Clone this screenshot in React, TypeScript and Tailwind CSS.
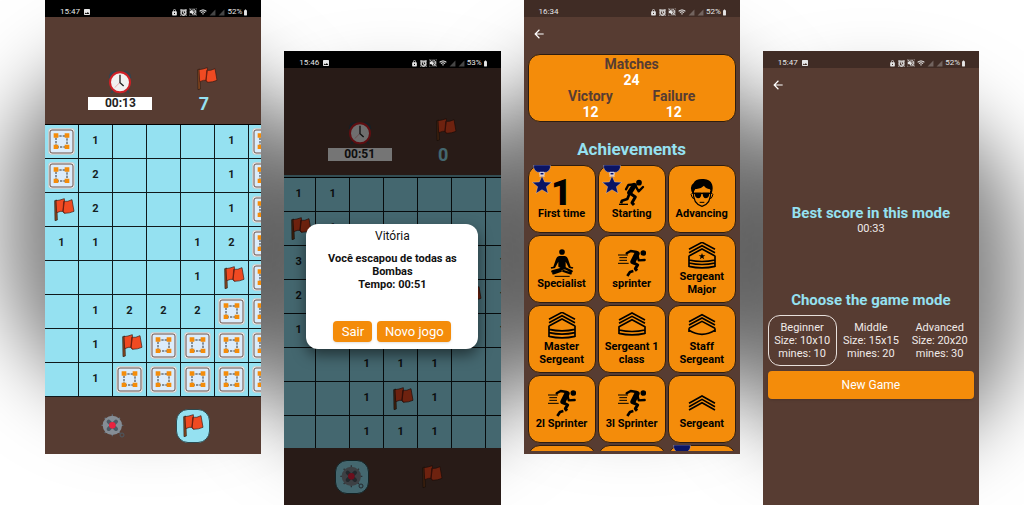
import type { ReactNode } from "react";
import {
  MdAlarm,
  MdArrowBack,
  MdBatteryFull,
  MdImage,
  MdLock,
  MdSignalCellular4Bar,
  MdVolumeOff,
  MdWifi,
} from "react-icons/md";

/* ---------- drawings ---------- */

function Flag({ className = "" }: { className?: string }) {
  return (
    <svg viewBox="0 0 66 72" className={className} aria-hidden="true">
      <path d="M5 8 L11 6 L13 66 L6 68 Z" fill="#8a4a20" stroke="#2b1a12" strokeWidth="2" />
      <path d="M9 8 Q20 7 34 2 L36 40 Q22 38 11 44 Z" fill="#f04a22" stroke="#3a1a12" strokeWidth="2" />
      <path d="M32 10 Q44 12 57 5 L63 40 Q50 46 34 46 Q29 42 30 38 Z" fill="#f04a22" stroke="#3a1a12" strokeWidth="2" />
      <path d="M34 10 L30 40 L35 46" fill="none" stroke="#6b1d10" strokeWidth="3" />
    </svg>
  );
}

function Clock() {
  return (
    <svg viewBox="0 0 72 72" className="h-6 w-6" aria-hidden="true">
      <path d="M2 24 Q2 4 22 2 L28 8 L8 28 Z M70 24 Q70 4 50 2 L44 8 L64 28 Z" fill="#34444e" />
      <path d="M16 60 L10 69 M56 60 L62 69" stroke="#34444e" strokeWidth="6" />
      <circle cx="36" cy="37" r="30" fill="#f1f1f1" stroke="#cf2027" strokeWidth="6" />
      <path d="M36 37 L20 53" stroke="#e58b8b" strokeWidth="2" />
      <path d="M36 14 V38 L47 48" fill="none" stroke="#222" strokeWidth="4" />
    </svg>
  );
}

function Mine() {
  return (
    <svg viewBox="0 0 72 72" className="h-6 w-6" aria-hidden="true">
      <path d="M34 1 V67 M1 34 H67 M11 11 L57 57 M57 11 L11 57" stroke="#5d6670" strokeWidth="4" />
      <circle cx="34" cy="34" r="29" fill="#858d95" />
      <path d="M23 23 L45 45 M45 23 L23 45" stroke="#4c5963" strokeWidth="12" strokeLinecap="round" />
      <circle cx="34" cy="34" r="10" fill="#e9223f" />
      <circle cx="63" cy="63" r="6" fill="none" stroke="#4c5963" strokeWidth="3" />
    </svg>
  );
}

function Tile() {
  return (
    <svg viewBox="0 0 81 81" className="h-[27px] w-[27px] shrink-0" aria-hidden="true">
      <rect x="1" y="1" width="79" height="79" rx="10" fill="#f0eeec" stroke="#b9bfc1" strokeWidth="2" />
      <rect x="6" y="6" width="69" height="69" rx="6" fill="#dcecfb" stroke="#6b5048" strokeWidth="3" />
      <path d="M24 24 H57 V57 H24 Z" fill="none" stroke="#333" strokeWidth="3" strokeDasharray="7 3" />
      <path d="M17 16 h14 v13 h-14z M50 16 h14 v13 h-14z M17 50 h14 v13 h-14z M50 50 h14 v13 h-14z" fill="#f48c0a" />
    </svg>
  );
}

function Sprinter() {
  return (
    <svg viewBox="0 0 84 84" className="h-7 w-7" fill="none" stroke="black" strokeLinejoin="round" aria-hidden="true">
      <path d="M0 18 H30 M4 26 H27 M4 34 H27 M0 43 H32" strokeWidth="3" />
      <circle cx="76" cy="12" r="8.5" fill="black" stroke="none" />
      <path d="M56 9 L38 6 L26 13" strokeWidth="7" strokeLinecap="round" />
      <path d="M57 14 L45 38" strokeWidth="16" strokeLinecap="round" />
      <path d="M58 17 L62 34 L80 33" strokeWidth="7" strokeLinecap="round" />
      <path d="M44 40 L59 48 L52 59 L57 65" strokeWidth="9" />
      <path d="M46 66 L36 69 L28 81" strokeWidth="8" />
    </svg>
  );
}

function Starter() {
  return (
    <svg viewBox="0 0 84 84" className="h-7 w-7" fill="none" stroke="black" strokeLinejoin="round" aria-hidden="true">
      <circle cx="63" cy="11" r="8.5" fill="black" stroke="none" />
      <path d="M46 16 L31 18 L24 31" strokeWidth="7" strokeLinecap="round" />
      <path d="M49 19 L35 41" strokeWidth="15" strokeLinecap="round" />
      <path d="M52 20 L62 37 L75 24" strokeWidth="7" strokeLinecap="round" />
      <path d="M36 43 L52 54 L42 71 L48 78" strokeWidth="9" />
      <path d="M34 45 L28 60 L12 65 L9 73" strokeWidth="8" />
      <path d="M3 76 H30" strokeWidth="4" />
    </svg>
  );
}

function Meditating() {
  return (
    <svg viewBox="0 0 84 84" className="h-7 w-7" aria-hidden="true">
      <circle cx="42" cy="9" r="8.5" />
      <path d="M33 21 H51 Q58 22 60 30 L68 53 L76 55 L74 59 L63 57 L53 38 L53 53 L42 59 L31 53 L31 38 L21 57 L10 59 L8 55 L16 53 L24 30 Q26 22 33 21 Z" />
      <path d="M13 67 L51 57 M71 67 L50 57 M16 73 L38 66 M68 73 L46 66" stroke="black" strokeWidth="7" strokeLinecap="round" />
      <path d="M20 82 H65" stroke="black" strokeWidth="3" />
    </svg>
  );
}

function CoolFace() {
  return (
    <svg viewBox="0 0 84 84" className="h-7 w-7" aria-hidden="true">
      <path d="M16 36 Q14 74 42 82 Q70 74 68 36" fill="none" stroke="black" strokeWidth="3.5" />
      <path d="M14 44 Q2 22 17 12 Q22 0 42 0 Q66 -1 72 16 Q77 30 70 45 L66 31 Q52 28 48 20 Q36 32 22 30 Z" />
      <path d="M13 41 h58 v4 h-58z" />
      <path d="M20 41 H40 Q41 57 30 58 Q20 56 20 41 Z M44 41 H64 Q64 56 54 58 Q43 57 44 41 Z" />
      <path d="M35 70 H49" stroke="black" strokeWidth="3" />
      <path d="M12 43 Q7 44 12 54 L17 60 M72 43 Q77 44 72 54 L67 60" fill="none" stroke="black" strokeWidth="3" />
    </svg>
  );
}

const chevrons = {
  three: "M3 43 L42 21 L81 43 M3 53 L42 31 L81 53 M3 63 L42 41 L81 63",
  staff: "M3 29 L42 8 L81 29 M3 39 L42 18 L81 39 M3 49 L42 28 L81 49 M3 49 V60 M81 49 V60 M3 55 Q42 79 81 55",
  first: "M3 24 L42 3 L81 24 M3 34 L42 13 L81 34 M3 44 L42 23 L81 44 M3 43 V66 M81 43 V66 M3 54 Q42 63 81 54 M3 64 Q42 73 81 64",
  master: "M3 22 L42 1 L81 22 M3 32 L42 11 L81 32 M3 42 L42 21 L81 42 M3 41 V75 M81 41 V75 M3 52 Q42 61 81 52 M3 62 Q42 71 81 62 M3 73 Q42 82 81 73",
  major: "M3 22 L42 1 L81 22 M3 32 L42 11 L81 32 M3 42 L42 21 L81 42 M3 41 V75 M81 41 V75 M3 54 Q42 63 81 54 M3 63 Q42 72 81 63 M3 73 Q42 82 81 73",
};

function Rank({ kind }: { kind: keyof typeof chevrons }) {
  return (
    <svg viewBox="0 0 84 84" className="h-7 w-7" aria-hidden="true">
      <path d={chevrons[kind]} fill="none" stroke="black" strokeWidth="5" />
      {kind === "major" && (
        <path d="M42 33 L44.5 40 H52 L46 44.5 L48.5 52 L42 47.5 L35.5 52 L38 44.5 L32 40 H39.5 Z" />
      )}
    </svg>
  );
}

function Medal() {
  return (
    <svg viewBox="0 0 60 87" className="absolute -top-px left-[3px] h-[29px] w-5" aria-hidden="true">
      <path d="M5 0 H55 V8 Q50 22 38 22 H22 Q10 22 5 8 Z" fill="#0a1464" stroke="#e8e4f4" strokeWidth="1" />
      <path d="M24 22 h12 v8 h-12z M22 33 h16" fill="#0a1464" stroke="#e8e4f4" strokeWidth="3" />
      <path d="M30 33 L38 51 L59 52 L43 65 L48 85 L30 74 L12 85 L17 65 L1 52 L22 51 Z" fill="#0a1464" stroke="#e8e4f4" strokeWidth="1" />
    </svg>
  );
}

/* ---------- phone shell ---------- */

function Phone({
  time,
  battery,
  dark,
  low,
  picture = true,
  children,
}: {
  time: string;
  battery: string;
  dark?: boolean;
  low?: boolean;
  picture?: boolean;
  children: ReactNode;
}) {
  return (
    <div className={`relative min-w-0 flex-1 ${low ? "pt-[51px]" : "pb-[51px]"}`}>
      <div
        aria-hidden="true"
        className={`absolute inset-x-0 -z-10 rounded-[108px] shadow-[0_0_80px_40px_rgba(0,0,0,0.5)] ${
          low ? "bottom-[90px] top-[140px]" : "bottom-[140px] top-[90px]"
        }`}
      />
      <section className="flex h-full flex-col overflow-hidden bg-[#573c32]">
        <header
          className={`flex h-[17px] shrink-0 items-center justify-between pl-[15px] pr-3 pt-[7px] text-[8px] leading-[10px] text-[#e6e6e6] ${
            dark ? "bg-black" : "bg-[#402c25]"
          }`}
        >
          <span className="flex items-center gap-[3px]">
            {time}
            {picture && <MdImage className="h-2 w-2" />}
          </span>
          <span className="flex items-center gap-[2px]">
            <MdLock className="h-[7px] w-[7px]" />
            <MdAlarm className="h-[7px] w-[7px] stroke-current stroke-2" />
            <MdVolumeOff className="h-2 w-2 stroke-current stroke-1" />
            <MdWifi className="h-2 w-2" />
            <MdSignalCellular4Bar className="h-[7px] w-[7px] opacity-30" />
            <MdSignalCellular4Bar className="h-[7px] w-[7px] opacity-30" />
            <span className="flex items-center">
              {battery}
              <MdBatteryFull className="h-[7px] w-[7px]" />
            </span>
          </span>
        </header>
        {children}
      </section>
    </div>
  );
}

/* ---------- game ---------- */

// "#" hidden tile, "F" flag, digit = neighbouring mines, "." empty
function Board({ rows }: { rows: string[] }) {
  return (
    <div className="grid grid-cols-[repeat(7,34px)]">
      {rows.flatMap((row, y) =>
        row.split("").map((cell, x) => (
          <button
            key={`${y}-${x}`}
            type="button"
            aria-label={`Row ${y + 1}, column ${x + 1}`}
            className="flex h-[34px] items-center justify-center border-b border-r border-[#10191c] bg-[#95e1f1] text-[11px] font-bold text-[#14201f]"
          >
            {cell === "#" ? <Tile /> : cell === "F" ? <Flag className="ml-1 h-6 w-[22px]" /> : cell === "." ? "" : cell}
          </button>
        )),
      )}
    </div>
  );
}

function Game({
  time,
  flags,
  tool,
  scrolled,
  rows,
}: {
  time: string;
  flags: number;
  tool: "mine" | "flag";
  scrolled?: boolean;
  rows: string[];
}) {
  const base = "flex h-[34px] w-[34px] items-center justify-center rounded-xl";
  const active = "border border-[#2d4a50] bg-[#95e1f1]";
  return (
    <div className="flex min-h-0 flex-1 flex-col">
      <div className="flex h-[107px] shrink-0 items-end justify-evenly pb-[10px]">
        <div className="flex flex-col items-center gap-[3px] pb-1">
          <Clock />
          <time className="w-16 bg-white text-center text-xs font-bold leading-[13px] text-[#222]">{time}</time>
        </div>
        <div className="flex flex-col gap-[3px]">
          <Flag className="h-6 w-[22px]" />
          <span className="w-4 text-center text-lg font-bold leading-5 text-[#95e1f1]">{flags}</span>
        </div>
      </div>
      <div
        className={`min-h-0 flex-1 overflow-hidden bg-[#6fa9b5] ${
          scrolled ? "[&>div]:-ml-0.5 [&>div]:mt-0.5 [&>div]:border-t" : "[&>div]:border-t"
        }`}
      >
        <Board rows={rows} />
      </div>
      <div className="flex h-[57px] shrink-0 items-center justify-center gap-[46px]">
        <button type="button" aria-label="Dig" className={`${base} ${tool === "mine" ? active : ""}`}>
          <Mine />
        </button>
        <button type="button" aria-label="Flag" className={`${base} ${tool === "flag" ? active : ""}`}>
          <Flag className="h-6 w-[22px]" />
        </button>
      </div>
    </div>
  );
}

function VictoryDialog() {
  const button = "rounded-sm bg-[#f48c0a] leading-[21px] text-[13px] text-white shadow-sm";
  return (
    <div className="absolute inset-0 flex items-center justify-center bg-black/54">
      <div
        role="dialog"
        aria-label="Vitória"
        className="flex w-[172px] flex-col items-center rounded-xl bg-white px-4 pb-[7px] pt-1 text-center text-[#111] shadow-[0_6px_14px_rgba(0,0,0,0.5)]"
      >
        <h2 className="text-xs leading-4">Vitória</h2>
        <p className="mt-2 text-[11px] font-bold leading-[13px]">
          Você escapou de todas as Bombas
          <br />
          Tempo: 00:51
        </p>
        <div className="mt-[30px] flex gap-[5px]">
          <button type="button" className={`${button} w-[39px]`}>
            Sair
          </button>
          <button type="button" className={`${button} w-[74px]`}>
            Novo jogo
          </button>
        </div>
      </div>
    </div>
  );
}

/* ---------- achievements ---------- */

function BackButton() {
  return (
    <button type="button" aria-label="Back" className="ml-2 mt-[10px] h-[14px] w-[14px] shrink-0 text-white">
      <MdArrowBack className="h-[14px] w-[14px]" />
    </button>
  );
}

function Stat({ label, value }: { label: string; value: number }) {
  return (
    <div className="flex flex-col items-center">
      <dt className="text-[#573c32]">{label}</dt>
      <dd className="text-white">{value}</dd>
    </div>
  );
}

const achievements: { name?: string; icon?: ReactNode; medal?: boolean }[] = [
  { name: "First time", icon: <span className="text-4xl font-black leading-7">1</span>, medal: true },
  { name: "Starting", icon: <Starter />, medal: true },
  { name: "Advancing", icon: <CoolFace /> },
  { name: "Specialist", icon: <Meditating /> },
  { name: "sprinter", icon: <Sprinter /> },
  { name: "Sergeant Major", icon: <Rank kind="major" /> },
  { name: "Master Sergeant", icon: <Rank kind="master" /> },
  { name: "Sergeant 1 class", icon: <Rank kind="first" /> },
  { name: "Staff Sergeant", icon: <Rank kind="staff" /> },
  { name: "2l Sprinter", icon: <Sprinter /> },
  { name: "3l Sprinter", icon: <Sprinter /> },
  { name: "Sergeant", icon: <Rank kind="three" /> },
  {},
  {},
  { medal: true },
];

function Achievements() {
  return (
    <div className="flex min-h-0 flex-1 flex-col pb-[3px]">
      <BackButton />
      <dl className="mx-1 mt-[13px] rounded-xl border border-[#2e1d10] bg-[#f48c0a] pb-px pt-px text-sm font-bold leading-4">
        <Stat label="Matches" value={24} />
        <div className="flex justify-evenly">
          <Stat label="Victory" value={12} />
          <Stat label="Failure" value={12} />
        </div>
      </dl>
      <h1 className="mt-[15px] text-center text-[17px] font-bold leading-6 text-[#95e1f1]">Achievements</h1>
      <ul className="mx-1 mt-1 grid min-h-0 flex-1 auto-rows-[68px] grid-cols-3 gap-0.5 overflow-hidden">
        {achievements.map((item, i) => (
          <li
            key={i}
            className="relative flex flex-col items-center justify-center rounded-xl border border-[#2e1d10] bg-[#f48c0a] text-center text-[11px] font-bold leading-[13px] text-black"
          >
            {item.medal && <Medal />}
            {item.icon}
            {item.name && <span className="px-1">{item.name}</span>}
          </li>
        ))}
      </ul>
    </div>
  );
}

/* ---------- mode picker ---------- */

const modes = [
  { name: "Beginner", size: "10x10", mines: 10, selected: true },
  { name: "Middle", size: "15x15", mines: 20, selected: false },
  { name: "Advanced", size: "20x20", mines: 30, selected: false },
];

function ModePicker() {
  return (
    <div className="flex min-h-0 flex-1 flex-col text-center text-[11px] text-[#f0eae8]">
      <BackButton />
      <h2 className="mt-[111px] text-[15px] font-bold leading-5 text-[#95e1f1]">Best score in this mode</h2>
      <p className="leading-3">00:33</p>
      <h2 className="mt-[53px] text-[15px] font-bold leading-6 text-[#95e1f1]">Choose the game mode</h2>
      <div className="mx-[5px] mt-[3px] grid grid-cols-3">
        {modes.map((mode) => (
          <button
            key={mode.name}
            type="button"
            aria-pressed={mode.selected}
            className={`whitespace-nowrap rounded-xl border py-[5px] leading-[13px] ${
              mode.selected ? "border-[#e8e0dc]" : "border-transparent"
            }`}
          >
            {mode.name}
            <br />
            Size: {mode.size}
            <br />
            mines: {mode.mines}
          </button>
        ))}
      </div>
      <button type="button" className="mx-[5px] mt-[5px] rounded-sm bg-[#f48c0a] text-xs leading-7 text-white shadow-sm">
        New Game
      </button>
    </div>
  );
}

export default function App() {
  return (
    <main className="relative isolate flex h-screen gap-[23px] overflow-hidden bg-white px-[45px] font-[Roboto,sans-serif]">
      <Phone time="15:47" battery="52%" dark>
        <Game
          time="00:13"
          flags={7}
          tool="flag"
          rows={["#1...1#", "#2...1#", "F2...1#", "11..12#", "....1F#", ".1222##", ".1F####", ".1#####"]}
        />
      </Phone>
      <Phone time="15:46" battery="53%" dark low>
        <div className="relative flex min-h-0 flex-1 flex-col">
          <Game
            time="00:51"
            flags={0}
            tool="mine"
            scrolled
            rows={["11.....", "F1.....", "3.....1", "2....F1", "1.....1", "..111..", "..1F1..", "..111.."]}
          />
          <VictoryDialog />
        </div>
      </Phone>
      <Phone time="16:34" battery="52%" picture={false}>
        <Achievements />
      </Phone>
      <Phone time="15:47" battery="52%" low>
        <ModePicker />
      </Phone>
    </main>
  );
}
